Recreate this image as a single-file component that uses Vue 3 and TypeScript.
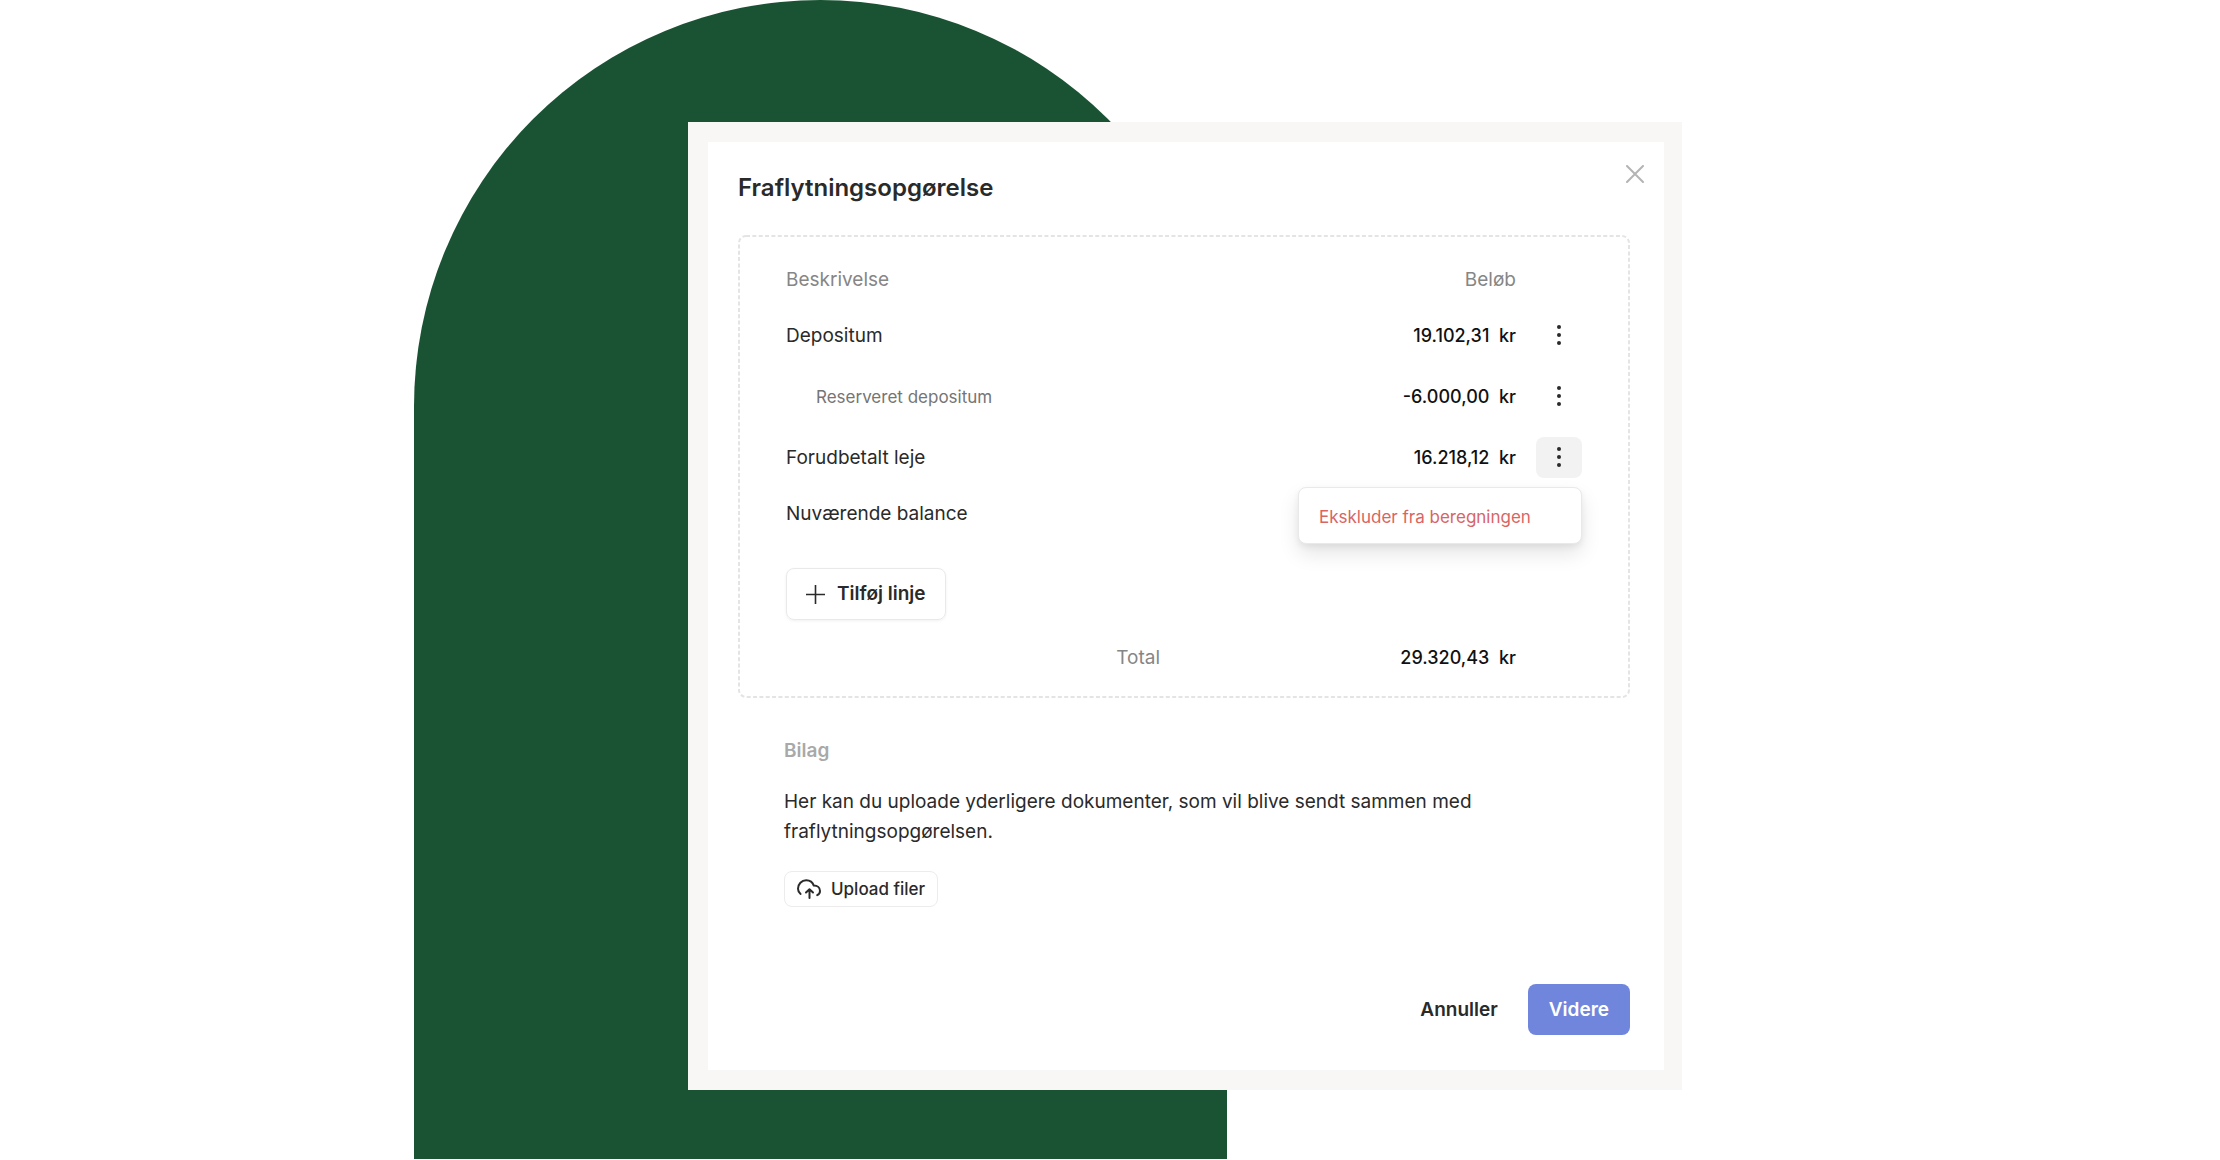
<script setup lang="ts">
import { ref } from 'vue'

interface Line {
  id: number
  label: string
  amount: string | null
  indented?: boolean
}

const lines: Line[] = [
  { id: 1, label: 'Depositum', amount: '19.102,31' },
  { id: 2, label: 'Reserveret depositum', amount: '-6.000,00', indented: true },
  { id: 3, label: 'Forudbetalt leje', amount: '16.218,12' },
  { id: 4, label: 'Nuværende balance', amount: null },
]

const openMenu = ref<number | null>(3)

function toggleMenu(id: number): void {
  openMenu.value = openMenu.value === id ? null : id
}
</script>

<template>
  <main class="scene">
    <div class="arch" aria-hidden="true"></div>
    <section class="frame" role="dialog" aria-labelledby="dialog-title">
      <div class="card">
        <header class="head">
          <h1 id="dialog-title" class="title">Fraflytningsopgørelse</h1>
          <button type="button" class="close" aria-label="Luk">
            <svg viewBox="0 0 18 18" width="18" height="18" fill="none" stroke="currentColor" stroke-width="2" stroke-linecap="round">
              <path d="M1 1l16 16M17 1L1 17" />
            </svg>
          </button>
        </header>

        <div class="statement">
          <svg class="outline" aria-hidden="true">
            <rect x="1" y="1" rx="7" />
          </svg>
          <table class="lines">
            <colgroup>
              <col class="col-label" />
              <col />
              <col class="col-menu" />
            </colgroup>
            <thead>
              <tr>
                <th scope="col">Beskrivelse</th>
                <th scope="col" class="right">Beløb</th>
                <td></td>
              </tr>
            </thead>
            <tbody>
              <tr v-for="line in lines" :key="line.id" :class="{ indented: line.indented }">
                <td class="label">{{ line.label }}</td>
                <td class="amount right"><template v-if="line.amount">{{ line.amount }}&nbsp;&nbsp;kr</template></td>
                <td class="menu-cell">
                  <div v-if="line.amount" class="menu-wrap">
                    <button
                      type="button"
                      class="kebab"
                      :class="{ open: openMenu === line.id }"
                      :aria-label="`Handlinger for ${line.label}`"
                      :aria-expanded="openMenu === line.id"
                      @click="toggleMenu(line.id)"
                    >
                      <svg viewBox="0 0 4 20" width="4" height="20" fill="currentColor">
                        <circle cx="2" cy="2" r="2" />
                        <circle cx="2" cy="10" r="2" />
                        <circle cx="2" cy="18" r="2" />
                      </svg>
                    </button>
                    <div v-if="openMenu === line.id" class="menu">
                      <button type="button" class="menu-item">Ekskluder fra beregningen</button>
                    </div>
                  </div>
                </td>
              </tr>
              <tr class="add-row">
                <td colspan="3">
                  <button type="button" class="add">
                    <svg viewBox="0 0 19 19" width="19" height="19" fill="none" stroke="currentColor" stroke-width="1.6">
                      <path d="M9.500 0v19M0 9.500h19" />
                    </svg>
                    Tilføj linje
                  </button>
                </td>
              </tr>
            </tbody>
            <tfoot>
              <tr>
                <th scope="row" class="right">Total</th>
                <td class="amount right">29.320,43&nbsp;&nbsp;kr</td>
                <td></td>
              </tr>
            </tfoot>
          </table>
        </div>

        <section class="attachments">
          <h2 class="subtitle">Bilag</h2>
          <p class="text">
            Her kan du uploade yderligere dokumenter, som vil blive sendt sammen med fraflytningsopgørelsen.
          </p>
          <button type="button" class="upload">
            <svg viewBox="0 0 24 20" width="24" height="20" fill="none" stroke="currentColor" stroke-width="2" stroke-linecap="round" stroke-linejoin="round">
              <path d="M3.600 15C1.800 13.600 1 12 1 9.800C1 5 4.600 1.200 9.200 1.200C12.800 1.200 15.800 3.400 16.800 6.600C20.400 6.600 23 8.800 23 12C23 14 22 15.400 20.200 16.200" />
              <path d="M12.500 19V11M9 13.500L12.500 10.200L16 13.500" />
            </svg>
            Upload filer
          </button>
        </section>

        <footer class="actions">
          <button type="button" class="cancel">Annuller</button>
          <button type="button" class="next">Videre</button>
        </footer>
      </div>
    </section>
  </main>
</template>

<style>
body {
  background: #fff;
}
</style>

<style scoped>
.scene {
  box-sizing: border-box;
  display: grid;
  grid-template-columns: minmax(0, 414fr) minmax(0, 274fr) minmax(0, 539fr) minmax(0, 455fr) minmax(0, 538fr);
  min-height: 100vh;
  padding-bottom: 1px;
  font-family: Inter, 'Liberation Sans', sans-serif;
  font-size: 19px;
  line-height: 30px;
  color: #2a2a2a;
}

button {
  margin: 0;
  padding: 0;
  border: 0;
  background: none;
  font: inherit;
  color: inherit;
  cursor: pointer;
}

svg {
  display: block;
  flex: none;
}

.arch {
  grid-column: 2 / 4;
  grid-row: 1;
  border-radius: 999px 999px 0 0;
  background: #195333;
}

.frame {
  grid-column: 3 / 5;
  grid-row: 1;
  align-self: start;
  box-sizing: border-box;
  margin: 122px 0 68px;
  padding: 20px 18px 20px 20px;
  background: #f8f7f5;
}

.card {
  padding-bottom: 35px;
  background: #fff;
}

.head {
  display: flex;
  align-items: flex-start;
  justify-content: space-between;
  padding: 23px 20px 32px 30px;
}

.title {
  margin: 8px 0 0;
  font-size: 24px;
  font-weight: 600;
}

.close {
  color: #b4b4b4;
}

.statement {
  position: relative;
  margin: 0 34px 0 30px;
  padding: 16px 48px 13px;
}

/* Dashed outline with a finer rhythm than border-style: dashed gives */
.outline {
  position: absolute;
  inset: 0;
  width: 100%;
  height: 100%;
  pointer-events: none;
}

.outline rect {
  width: calc(100% - 2px);
  height: calc(100% - 2px);
  fill: none;
  stroke: #e4e4e4;
  stroke-width: 2px;
  stroke-dasharray: 4 2.35;
}

.lines {
  width: 100%;
  table-layout: fixed;
  border-collapse: collapse;
}

.col-label {
  width: 47%;
}

.col-menu {
  width: 66px;
}

.lines th,
.lines td {
  box-sizing: border-box;
  height: 56px;
  padding: 0;
  text-align: left;
  vertical-align: middle;
}

.lines th,
.lines .label,
.lines .amount {
  padding-top: 2px;
}

.lines th {
  font-weight: 400;
  color: #868686;
}

.lines .right {
  text-align: right;
}

.lines .amount {
  font-size: 18px;
  font-weight: 500;
  color: #111;
}

.lines .indented td {
  height: 66px;
}

.lines .indented .label {
  padding-left: 30px;
  font-size: 17px;
  color: #757575;
}

.menu-wrap {
  position: relative;
  width: 46px;
  margin-left: auto;
}

.kebab {
  display: flex;
  align-items: center;
  justify-content: center;
  width: 46px;
  height: 41px;
  border-radius: 8px;
}

.kebab.open {
  background: #f2f2f2;
}

.menu {
  position: absolute;
  z-index: 1;
  top: 50px;
  right: 0;
  box-sizing: border-box;
  width: 284px;
  padding: 14px 20px 11px;
  border: 1px solid #e9e9e9;
  border-radius: 8px;
  background: #fff;
  box-shadow: 0 10px 20px rgba(0, 0, 0, 0.1), 0 3px 6px rgba(0, 0, 0, 0.06);
}

.menu-item {
  display: block;
  font-size: 17px;
  white-space: nowrap;
  color: #d96563;
}

.lines .add-row td {
  height: 88px;
  padding-top: 27px;
  vertical-align: top;
}

.add {
  display: flex;
  align-items: center;
  gap: 12px;
  height: 52px;
  padding: 0 19px;
  border: 1px solid #e9e9e9;
  border-radius: 8px;
  box-shadow: 0 1px 3px rgba(0, 0, 0, 0.06);
  font-weight: 600;
}

.attachments {
  margin: 38px 80px 0 76px;
}

.subtitle {
  margin: 0 0 21px;
  font-size: 19px;
  font-weight: 600;
  line-height: 30px;
  color: #a9a9a9;
}

.text {
  max-width: 720px;
  margin: 0 0 24px;
}

.upload {
  display: flex;
  align-items: center;
  gap: 10px;
  height: 36px;
  padding: 0 12px;
  border: 1px solid #ececec;
  border-radius: 8px;
  font-size: 17px;
  font-weight: 500;
}

.actions {
  display: flex;
  justify-content: flex-end;
  gap: 30px;
  margin: 77px 34px 0 30px;
  font-weight: 600;
}

.next {
  height: 51px;
  padding: 0 21px;
  border-radius: 8px;
  background: #7085dc;
  color: #fff;
}
</style>
